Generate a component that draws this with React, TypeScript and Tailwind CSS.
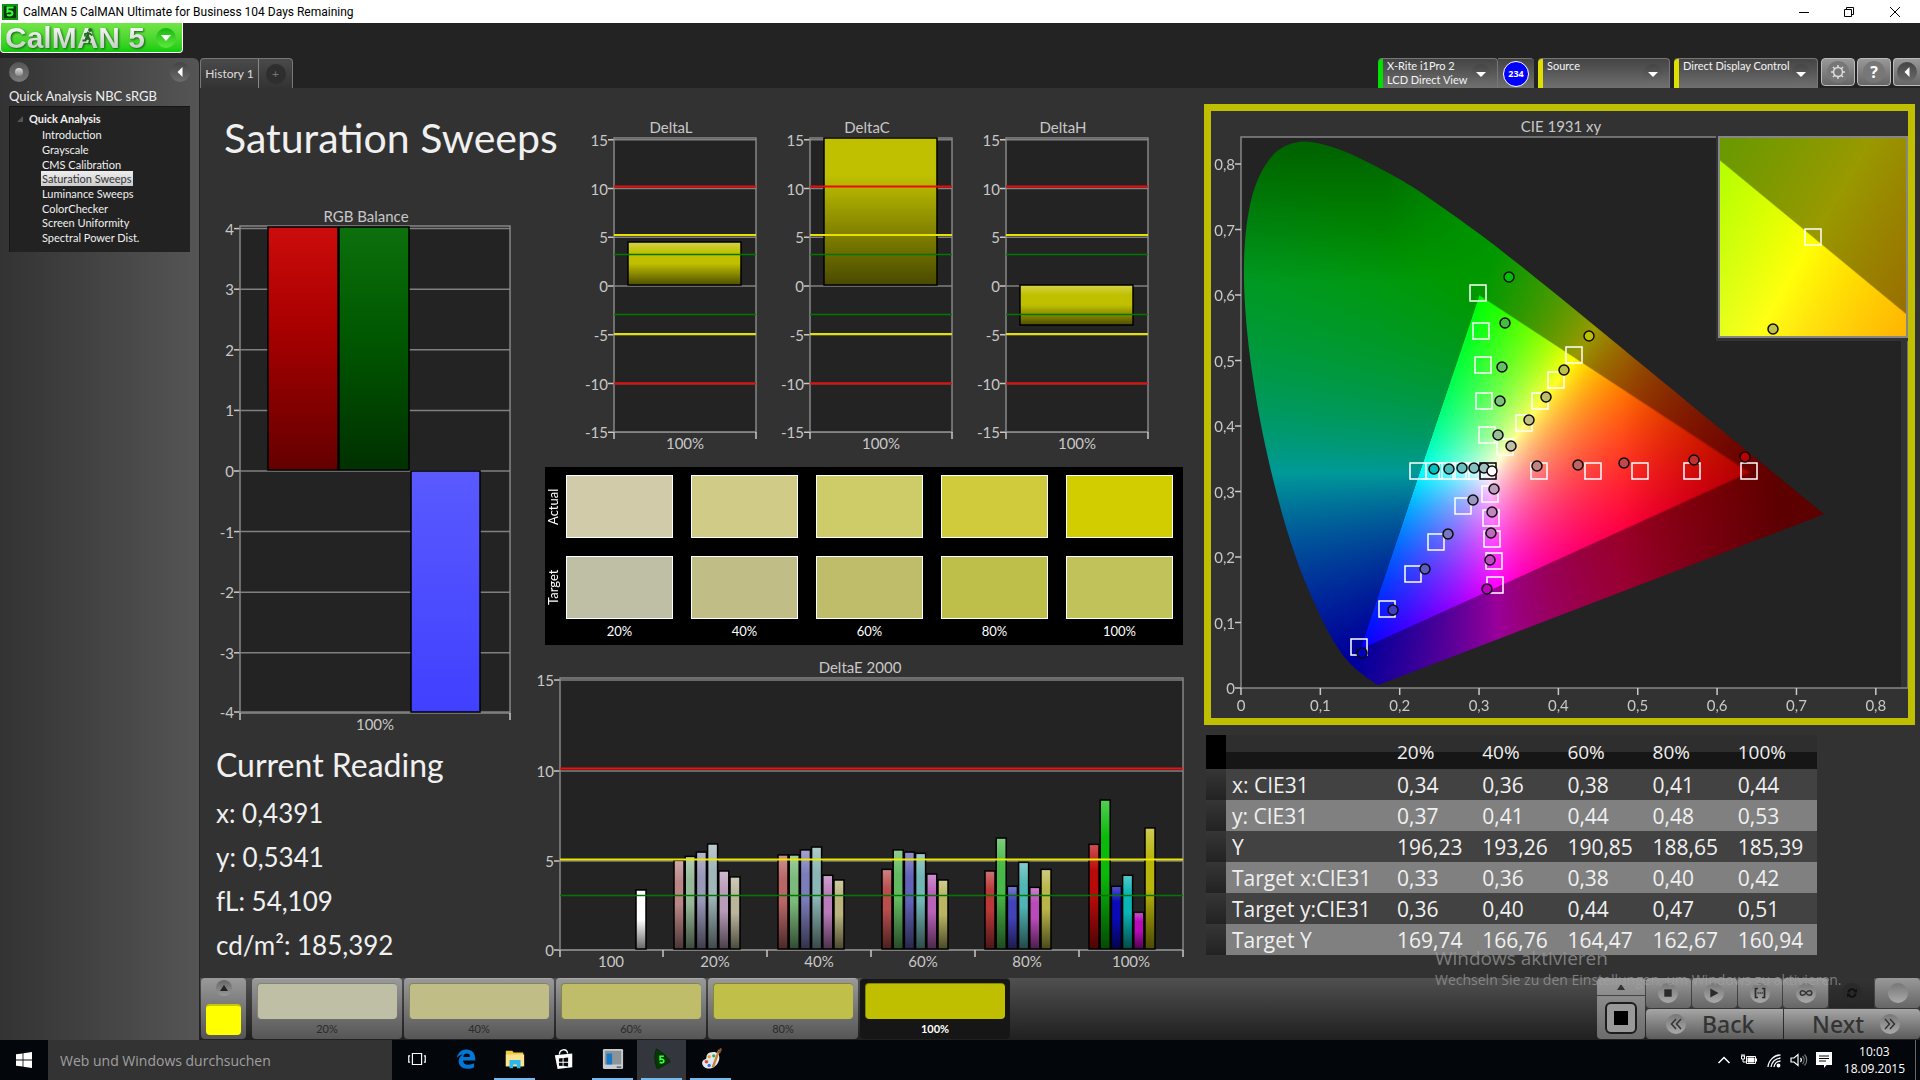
import { useEffect, useRef } from "react";
import type { ReactNode } from "react";

type Point = [number, number];

const navItems = [
  "Introduction",
  "Grayscale",
  "CMS Calibration",
  "Saturation Sweeps",
  "Luminance Sweeps",
  "ColorChecker",
  "Screen Uniformity",
  "Spectral Power Dist.",
];

const levels = ["20%", "40%", "60%", "80%", "100%"];
const actualColors = ["#d1cbaa", "#d1cb88", "#cecb69", "#d0cb3c", "#d1cd00"];
const targetColors = ["#bfbfa5", "#c0be86", "#bfbd69", "#bebe4a", "#c2c25a"];
const patternColors = ["#bfbfa5", "#c0be86", "#bfbd69", "#bfbf4a", "#bfbf00"];

const tableRows = [
  ["x: CIE31", "0,34", "0,36", "0,38", "0,41", "0,44"],
  ["y: CIE31", "0,37", "0,41", "0,44", "0,48", "0,53"],
  ["Y", "196,23", "193,26", "190,85", "188,65", "185,39"],
  ["Target x:CIE31", "0,33", "0,36", "0,38", "0,40", "0,42"],
  ["Target y:CIE31", "0,36", "0,40", "0,44", "0,47", "0,51"],
  ["Target Y", "169,74", "166,76", "164,47", "162,67", "160,94"],
];

const deltaE = [
  {
    values: [4.98, 5.2, 5.44, 5.89, 4.39, 4.06],
    colors: ["#b98585", "#98b998", "#9898b9", "#a0b6b9", "#b99cb9", "#b9b69c"],
  },
  {
    values: [5.28, 5.28, 5.56, 5.72, 4.15, 3.89],
    colors: ["#b96666", "#7cb97c", "#7c7cb9", "#8cb5b5", "#b97cb9", "#b9b57c"],
  },
  {
    values: [4.48, 5.56, 5.44, 5.37, 4.22, 3.89],
    colors: ["#b94e4e", "#62b962", "#6262b9", "#72b5b5", "#b962b9", "#b9b562"],
  },
  {
    values: [4.39, 6.22, 3.54, 4.87, 3.48, 4.48],
    colors: ["#b93838", "#48b948", "#4242b9", "#52b5b5", "#b94ab9", "#b9b54a"],
  },
  {
    values: [5.87, 8.33, 3.54, 4.15, 2.09, 6.78],
    colors: ["#b90a0a", "#0ab90a", "#0a0ab9", "#0ab5b5", "#b90ab9", "#b9b50a"],
  },
];

/* ---------- CIE 1931 diagram data ---------- */

const locus: Point[] = [
  [0.1741, 0.005], [0.1714, 0.0051], [0.1689, 0.0069], [0.1644, 0.0109],
  [0.1566, 0.0177], [0.144, 0.0297], [0.1355, 0.0399], [0.1241, 0.0578],
  [0.1096, 0.0868], [0.0913, 0.1327], [0.0687, 0.2007], [0.0454, 0.295],
  [0.0235, 0.4127], [0.0082, 0.5384], [0.0039, 0.6548], [0.0139, 0.7502],
  [0.0389, 0.812], [0.0743, 0.8338], [0.1142, 0.8262], [0.1547, 0.8059],
  [0.1929, 0.7816], [0.2296, 0.7543], [0.3016, 0.6923], [0.3731, 0.6245],
  [0.4441, 0.5547], [0.5125, 0.4866], [0.5752, 0.4242], [0.627, 0.3725],
  [0.6915, 0.3083], [0.7347, 0.2653],
];

const targets: Point[] = [
  [237, 156], [240, 194], [242, 228], [243, 264], [246, 298],
  [333, 218], [315, 243], [299, 264], [283, 286], [264, 310],
  [298, 334], [352, 334], [399, 334], [451, 334], [508, 334],
  [177, 334], [193, 334], [206, 334], [220, 334], [233, 334],
  [249, 357], [250, 381], [251, 402], [253, 424], [254, 448],
  [222, 369], [195, 405], [172, 437], [146, 472], [118, 510],
];

const measured: [number, number, string][] = [
  [268, 140, "#00bf00"], [264, 186, "#40bf40"], [261, 230, "#62bf62"], [259, 264, "#7dbf7d"], [257, 298, "#98bf98"],
  [348, 199, "#bfbf00"], [323, 233, "#bfbf4a"], [305, 260, "#bfbd69"], [288, 283, "#c0be86"], [270, 309, "#bfbfa5"],
  [296, 329, "#bf8585"], [337, 328, "#bf6262"], [383, 326, "#bf4848"], [453, 323, "#bf3030"], [504, 320, "#bf0000"],
  [193, 332, "#00bfbf"], [208, 332, "#4abfbf"], [221, 331, "#69bfbf"], [233, 331, "#86bfbf"], [243, 331, "#a0bfbf"],
  [253, 352, "#bf9fbf"], [251, 375, "#bf86bf"], [250, 396, "#bf69bf"], [249, 423, "#bf4abf"], [246, 452, "#bf00bf"],
  [232, 363, "#9898bf"], [207, 397, "#7878bf"], [184, 432, "#5c5cbf"], [152, 473, "#4040bf"], [121, 516, "#0000bf"],
];

const clamp = (v: number) => Math.min(1, Math.max(0, v));

function chromaColor(x: number, y: number, edge: number): [number, number, number] {
  const yy = Math.max(y, 0.002);
  const X = x / yy;
  const Z = (1 - x - yy) / yy;
  const r = 3.2406 * X - 1.5372 - 0.4986 * Z;
  const g = -0.9689 * X + 1.8758 + 0.0415 * Z;
  const b = 0.0557 * X - 0.204 + 1.057 * Z;
  const max = Math.max(r, g, b);
  const inside = clamp((Math.min(r, g, b) / max) * edge + 0.5);
  const redFade = 1 - 0.4 * clamp((x - 0.48) / 0.2) * clamp(r / max);
  const greenFade = 1 - 0.34 * clamp((y - 0.62) / 0.2) * clamp((0.34 - x) / 0.16);
  const k = 255 * (0.6 + 0.4 * inside) * redFade * greenFade;
  return [clamp(r / max) * k, clamp(g / max) * k, clamp(b / max) * k];
}

type GamutProps = {
  width: number;
  height: number;
  edge: number;
  toXy: (px: number, py: number) => Point;
  outline?: (x: number, y: number) => Point;
};

function GamutCanvas({ width, height, edge, toXy, outline }: GamutProps) {
  const ref = useRef<HTMLCanvasElement>(null);

  useEffect(() => {
    const ctx = ref.current?.getContext("2d");
    if (!ctx) return;
    const image = ctx.createImageData(width, height);
    for (let py = 0; py < height; py++) {
      for (let px = 0; px < width; px++) {
        const [x, y] = toXy(px, py);
        const [r, g, b] = chromaColor(x, y, edge);
        const i = (py * width + px) * 4;
        image.data[i] = r;
        image.data[i + 1] = g;
        image.data[i + 2] = b;
        image.data[i + 3] = 255;
      }
    }
    ctx.putImageData(image, 0, 0);
    if (!outline) return;

    // keep only what lies inside the spectral locus
    const pts = locus.map(([x, y]) => outline(x, y));
    ctx.globalCompositeOperation = "destination-in";
    ctx.beginPath();
    ctx.moveTo(pts[0][0], pts[0][1]);
    for (let i = 0; i < pts.length - 1; i++) {
      const p0 = pts[Math.max(0, i - 1)];
      const p1 = pts[i];
      const p2 = pts[i + 1];
      const p3 = pts[Math.min(pts.length - 1, i + 2)];
      ctx.bezierCurveTo(
        p1[0] + (p2[0] - p0[0]) / 6,
        p1[1] + (p2[1] - p0[1]) / 6,
        p2[0] - (p3[0] - p1[0]) / 6,
        p2[1] - (p3[1] - p1[1]) / 6,
        p2[0],
        p2[1],
      );
    }
    ctx.closePath();
    ctx.fill();
    ctx.globalCompositeOperation = "source-over";
  }, [width, height, edge, toXy, outline]);

  return <canvas ref={ref} width={width} height={height} className="block" />;
}

const plotToXy = (px: number, py: number): Point => [px / 793.5, (551 - py) / 655];
const xyToPlot = (x: number, y: number): Point => [x * 793.5, 551 - y * 655];
const insetToXy = (px: number, py: number): Point => [0.4193 + (px - 94) / 3600, 0.5053 - (py - 100) / 3740];

/* ---------- Chart parts ---------- */

type LabelProps = { x: number; y: number; anchor?: "start" | "middle" | "end"; children: ReactNode };

function Label({ x, y, anchor = "middle", children }: LabelProps) {
  return (
    <text x={x} y={y} textAnchor={anchor} className="fill-[#c8c8c8] text-[15px]">
      {children}
    </text>
  );
}

type PlotProps = {
  left: number;
  right: number;
  top: number;
  bottom: number;
  rows: [number, string][];
  ticks: number[];
};

function Plot({ left, right, top, bottom, rows, ticks }: PlotProps) {
  return (
    <g>
      <rect x={left} y={top} width={right - left} height={bottom - top} fill="#232323" />
      {rows.map(([y, text]) => (
        <g key={text}>
          <path d={`M${left} ${y}H${right}`} stroke="#808080" strokeWidth="1.5" />
          <path d={`M${left - 6} ${y}H${left}`} stroke="#c8c8c8" strokeWidth="1.5" />
          <Label x={left - 6} y={y + 6} anchor="end">{text}</Label>
        </g>
      ))}
      <rect x={left} y={top} width={right - left} height={bottom - top} fill="none" stroke="#868686" strokeWidth="1.5" />
      {ticks.map((x) => (
        <path key={x} d={`M${x} ${bottom}v7`} stroke="#c8c8c8" strokeWidth="1.5" />
      ))}
    </g>
  );
}

function BarShade() {
  return (
    <linearGradient id="barShade" x1="0" y1="0" x2="0" y2="1">
      <stop offset="0" stopColor="#fff" stopOpacity="0.3" />
      <stop offset="0.25" stopColor="#fff" stopOpacity="0" />
      <stop offset="0.5" stopColor="#000" stopOpacity="0" />
      <stop offset="1" stopColor="#000" stopOpacity="0.6" />
    </linearGradient>
  );
}

type BarProps = { x: number; y: number; width: number; height: number; fill: string; shade?: string };

function Bar({ x, y, width, height, fill, shade = "url(#barShade)" }: BarProps) {
  return (
    <g>
      <rect x={x} y={y} width={width} height={height} fill={fill} />
      <rect x={x} y={y} width={width} height={height} fill={shade} stroke="#000" strokeWidth="1.5" />
    </g>
  );
}

function RgbBalance() {
  const rows = [4, 3, 2, 1, 0, -1, -2, -3, -4].map((v): [number, string] => [
    Math.min(507, 266 - v * 60.6),
    String(v),
  ]);
  return (
    <svg viewBox="0 0 330 530" className="w-full" role="img" aria-label="RGB Balance">
      <defs>
        <linearGradient id="redBar" x1="0" y1="0" x2="0" y2="1">
          <stop offset="0" stopColor="#cc0c0c" />
          <stop offset="0.38" stopColor="#ac0000" />
          <stop offset="1" stopColor="#640000" />
        </linearGradient>
        <linearGradient id="greenBar" x1="0" y1="0" x2="0" y2="1">
          <stop offset="0" stopColor="#0c700c" />
          <stop offset="0.45" stopColor="#005800" />
          <stop offset="1" stopColor="#003000" />
        </linearGradient>
        <linearGradient id="blueBar" x1="0" y1="0" x2="0" y2="1">
          <stop offset="0" stopColor="#5a5aff" />
          <stop offset="1" stopColor="#4040ff" />
        </linearGradient>
      </defs>
      <Label x={166} y={17}>RGB Balance</Label>
      <Plot left={40} right={310} top={21} bottom={508} rows={rows} ticks={[40, 310]} />
      <Bar x={68} y={22} width={70} height={243} fill="#a00000" shade="url(#redBar)" />
      <Bar x={139} y={22} width={70} height={243} fill="#005000" shade="url(#greenBar)" />
      <Bar x={211} y={266} width={69} height={241} fill="#4a4aff" shade="url(#blueBar)" />
      <Label x={175} y={525}>100%</Label>
    </svg>
  );
}

function DeltaChart({ title, top, bottom }: { title: string; top: number; bottom: number }) {
  const rows = [15, 10, 5, 0, -5, -10, -15].map((v): [number, string] => [176 - v * 9.75, String(v)]);
  const clipped = top <= 29;
  return (
    <svg viewBox="0 0 196 350" className="w-full" role="img" aria-label={title}>
      <defs>
        <linearGradient id="tallShade" x1="0" y1="0" x2="0" y2="1">
          <stop offset="0.25" stopColor="#000" stopOpacity="0" />
          <stop offset="1" stopColor="#000" stopOpacity="0.62" />
        </linearGradient>
      </defs>
      <Label x={91} y={23}>{title}</Label>
      <Plot left={34} right={176} top={28} bottom={322} rows={rows} ticks={[34, 176]} />
      <Bar
        x={48}
        y={top}
        width={113}
        height={bottom - top}
        fill="#c0c000"
        shade={clipped ? "url(#tallShade)" : undefined}
      />
      <path d="M34 76.5H176M34 273.5H176" stroke="#e80c0c" strokeWidth="2" />
      <path d="M34 125H176M34 224H176" stroke="#e6e000" strokeWidth="2" />
      <path d="M34 144.5H176M34 204.5H176" stroke="#007800" strokeWidth="1.5" />
      <Label x={105} y={339}>100%</Label>
    </svg>
  );
}

function DeltaEChart() {
  const groupX = [144, 248, 352, 455, 559];
  return (
    <svg viewBox="0 0 674 322" className="w-full" role="img" aria-label="DeltaE 2000">
      <defs>
        <BarShade />
      </defs>
      <Label x={330} y={23}>DeltaE 2000</Label>
      <Plot
        left={30}
        right={653}
        top={28}
        bottom={300}
        rows={[[30, "15"], [121, "10"], [211, "5"], [300, "0"]]}
        ticks={[30, 133, 237, 341, 445, 549, 653]}
      />
      <Bar x={106} y={240} width={10} height={59} fill="#ffffff" />
      {deltaE.map((group, g) =>
        group.values.map((v, i) => (
          <Bar
            key={`${g}-${i}`}
            x={groupX[g] + i * 11.2}
            y={300 - v * 18}
            width={10}
            height={v * 18 - 1}
            fill={group.colors[i]}
          />
        )),
      )}
      <path d="M30 118.5H653" stroke="#f01010" strokeWidth="2" />
      <path d="M30 209.5H653" stroke="#ece800" strokeWidth="2" />
      <path d="M30 245.5H653" stroke="#007800" strokeWidth="1.5" />
      {["100", ...levels].map((text, i) => (
        <Label key={text} x={81 + i * 104} y={317}>{text}</Label>
      ))}
    </svg>
  );
}

function CieDiagram() {
  return (
    <svg viewBox="0 0 697 607" className="w-full" role="img" aria-label="CIE 1931 xy">
      <Label x={350} y={21}>CIE 1931 xy</Label>
      <rect x="30" y="26" width="660" height="551" fill="#232323" />
      <foreignObject x="30" y="26" width="660" height="551">
        <GamutCanvas width={660} height={551} edge={200} toXy={plotToXy} outline={xyToPlot} />
      </foreignObject>
      <rect x="30" y="26" width="667" height="551" fill="none" stroke="#868686" strokeWidth="1.5" />
      {[0, 1, 2, 3, 4, 5, 6, 7, 8].map((n) => {
        const text = n === 0 ? "0" : `0,${n}`;
        return (
          <g key={n}>
            <path
              d={`M24 ${577 - n * 65.5}h6M${30 + n * 79.35} 577v7`}
              stroke="#c8c8c8"
              strokeWidth="1.5"
            />
            <Label x={24} y={583 - n * 65.5} anchor="end">{text}</Label>
            <Label x={30 + n * 79.35} y={600}>{text}</Label>
          </g>
        );
      })}
      <g transform="translate(30 26)" strokeWidth="1.5">
        {targets.map(([x, y]) => (
          <rect key={`${x}-${y}`} x={x - 8} y={y - 8} width="16" height="16" fill="none" stroke="#fff" />
        ))}
        <rect x="239" y="326" width="16" height="16" fill="none" stroke="#000" />
        {measured.map(([x, y, fill]) => (
          <circle key={`${x}-${y}`} cx={x} cy={y} r="5" fill={fill} stroke="#0c0c0c" />
        ))}
        <circle cx="251" cy="334" r="5" fill="#fff" stroke="#0c0c0c" />
      </g>
      {/* Magnified view of the selected point */}
      <rect x="505" y="24" width="192" height="206" fill="#323232" />
      <foreignObject x="508" y="26" width="189" height="200">
        <GamutCanvas width={189} height={200} edge={900} toXy={insetToXy} />
      </foreignObject>
      <rect x="508" y="26" width="188" height="200" fill="none" stroke="#868686" strokeWidth="2" />
      <rect x="594" y="118" width="16" height="16" fill="none" stroke="#fff" strokeWidth="1.5" />
      <circle cx="562" cy="218" r="5" fill="#bfbf4a" stroke="#0c0c0c" strokeWidth="1.5" />
    </svg>
  );
}

/* ---------- Shell parts ---------- */

function RoundArrow({ d }: { d: string }) {
  return (
    <span className="flex size-5 shrink-0 items-center justify-center rounded-full bg-gradient-to-b from-[#444] to-[#6c6c6c]">
      <svg viewBox="0 0 12 12" className="size-3 fill-white">
        <path d={d} />
      </svg>
    </span>
  );
}

function TitleBar() {
  return (
    <header className="flex h-[23px] items-center bg-white pl-0.5 text-black">
      <svg viewBox="0 0 16 16" className="size-4">
        <rect width="16" height="16" fill="#0a3a0a" />
        <rect x="1" y="1" width="14" height="14" fill="none" stroke="#12b012" strokeWidth="1.5" />
        <path d="M11.5 3.5h-6v4.2c1.5-.9 5-.8 5 1.6 0 2.2-3 2.6-5.4 1.6" fill="none" stroke="#3cff3c" strokeWidth="2" />
      </svg>
      <span className="ml-[5px] font-['Roboto',sans-serif] text-[12px]">
        CalMAN 5 CalMAN Ultimate for Business 104 Days Remaining
      </span>
      <div className="ml-auto flex">
        <button aria-label="Minimize" className="flex h-[23px] w-[45px] items-center justify-center">
          <svg viewBox="0 0 10 10" className="size-2.5 stroke-black"><path d="M0 5.5h10" /></svg>
        </button>
        <button aria-label="Restore" className="flex h-[23px] w-[46px] items-center justify-center">
          <svg viewBox="0 0 10 10" className="size-2.5 fill-none stroke-black">
            <path d="M.5 2.5h7v7h-7zM2.5 2.5v-2h7v7h-2" />
          </svg>
        </button>
        <button aria-label="Close" className="mr-0.5 flex h-[23px] w-[46px] items-center justify-center">
          <svg viewBox="0 0 10 10" className="size-2.5 stroke-black"><path d="M0 0l10 10M10 0L0 10" /></svg>
        </button>
      </div>
    </header>
  );
}

function Logo() {
  return (
    <button
      aria-label="CalMAN 5 menu"
      className="flex h-[30px] w-[183px] items-center justify-between rounded-b-sm border-b border-l border-r border-white bg-gradient-to-b from-[#72e548] to-[#08cc08] pl-1 pr-1.5"
    >
      <span className="relative whitespace-nowrap bg-gradient-to-b from-white to-[#bcc4bc] bg-clip-text font-['Liberation_Sans',sans-serif] text-[30px] font-bold leading-[30px] text-transparent drop-shadow-[1px_1px_1px_#1a5a1a]">
        CalMAN 5
        <svg viewBox="0 0 14 18" className="absolute left-[76px] top-1 h-[18px] w-3.5 fill-none stroke-[#1f6a1f]" strokeWidth="1.8">
          <circle cx="9" cy="3" r="1" />
          <path d="M8 5.500l-2 5 3 2-1 4M6 10.500l-1.500 3H1.500M8 6l3.500 2.500M7.500 6L4 7v2.500" />
        </svg>
      </span>
      <span className="flex size-5 items-center justify-center rounded-full bg-gradient-to-b from-[#0cb80c] to-[#5ce83c]">
        <svg viewBox="0 0 10 6" className="h-1.5 w-2.5 fill-white"><path d="M0 0h10L5 6z" /></svg>
      </span>
    </button>
  );
}

function Sidebar() {
  return (
    <aside className="mt-[5px] flex-1 rounded-tr-md bg-gradient-to-r from-[#333] to-[#555] px-[9px]">
      <div className="flex h-7 items-center justify-between">
        <span className="flex size-5 items-center justify-center rounded-full bg-gradient-to-b from-[#555] to-[#7a7a7a]">
          <span className="size-2 rounded-full bg-gradient-to-b from-[#ddd] to-[#888]" />
        </span>
        <button aria-label="Collapse panel">
          <RoundArrow d="M8.500 1v10L3.500 6z" />
        </button>
      </div>
      <h2 className="text-[13px] leading-5 text-[#f0f0f0]">Quick Analysis NBC sRGB</h2>
      <nav className="h-[146px] border-l border-t border-[#151515] bg-[#222] pl-[7px] pt-1 text-[11px] text-[#f0f0f0]">
        <p className="flex h-4 items-center gap-1.5 font-bold">
          <svg viewBox="0 0 6 6" className="size-1.5 fill-[#555]"><path d="M6 0v6H0z" /></svg>
          Quick Analysis
        </p>
        <ul className="pl-6">
          {navItems.map((item) => (
            <li key={item} className="h-[15px] leading-[15px] nth-[3n]:h-[14px]">
              <a
                href="#"
                className={
                  item === "Saturation Sweeps"
                    ? "inline-block bg-gradient-to-b from-[#eee] to-[#ccc] px-px text-[#333]"
                    : "inline-block px-px"
                }
              >
                {item}
              </a>
            </li>
          ))}
        </ul>
      </nav>
    </aside>
  );
}

function DeviceButton({ lines, color, width }: { lines: string[]; color: string; width: string }) {
  return (
    <button
      className={`flex h-[30px] items-start justify-between rounded-t border-r border-t border-[#777] bg-gradient-to-b from-[#444] to-[#707070] pr-1.5 text-left text-[11px] leading-[14px] text-[#f4f4f4] ${width}`}
    >
      <span className={`h-full w-[5px] shrink-0 rounded-tl ${color}`} />
      <span className="ml-1 flex-1 whitespace-nowrap">
        {lines.map((line) => (
          <span key={line} className="block">{line}</span>
        ))}
      </span>
      <span className="mt-[5px]">
        <RoundArrow d="M1 4h10L6 9z" />
      </span>
    </button>
  );
}

function TopBar() {
  const square =
    "flex h-7 w-[34px] items-center justify-center rounded border border-[#bbb] bg-gradient-to-b from-[#999] to-[#666] text-white";
  return (
    <div className="flex h-[65px] items-end justify-between bg-[#232323]">
      <div className="flex h-[30px] rounded-t border border-b-0 border-[#777] bg-gradient-to-b from-[#4a4a4a] to-[#333] text-[12px] text-[#ddd]">
        <button className="w-[58px] border-r border-[#888]">History 1</button>
        <button aria-label="Add history" className="flex w-[33px] items-center justify-center">
          <span className="flex size-5 items-center justify-center rounded-full bg-[#2e2e2e] text-[#777]">+</span>
        </button>
      </div>
      <div className="flex items-start">
        <DeviceButton lines={["X-Rite i1Pro 2", "LCD Direct View"]} color="bg-[#00e000]" width="w-[120px]" />
        <div className="mr-1 flex h-[30px] w-9 items-center justify-center rounded-tr border-t border-[#777] bg-gradient-to-b from-[#444] to-[#707070]">
          <span className="flex size-[26px] items-center justify-center rounded-full border border-white bg-[#0000ff] font-['Open_Sans',sans-serif] text-[9px] font-bold text-white">
            234
          </span>
        </div>
        <DeviceButton lines={["Source"]} color="bg-[#e0e000]" width="mr-1 w-[132px]" />
        <DeviceButton lines={["Direct Display Control"]} color="bg-[#e0e000]" width="mr-[3px] w-[144px]" />
        <div className="flex gap-0.5 overflow-hidden">
          <button aria-label="Settings" className={square}>
            <span className="flex size-[22px] items-center justify-center rounded-full bg-[#777]">
              <svg viewBox="0 0 16 16" className="size-4 fill-none stroke-[#ddd]" strokeWidth="1.5">
                <circle cx="8" cy="8" r="4.500" />
                <path d="M8 1v2.500M8 12.500V15M1 8h2.500M12.500 8H15M3 3l2 2M11 11l2 2M13 3l-2 2M3 13l2-2" />
              </svg>
            </span>
          </button>
          <button aria-label="Help" className={`${square} font-['Open_Sans',sans-serif] text-[16px] font-bold`}>
            <span className="flex size-[22px] items-center justify-center rounded-full bg-[#777]">?</span>
          </button>
          <button aria-label="Collapse" className="flex h-7 w-[27px] items-center justify-center rounded-l border border-r-0 border-[#bbb] bg-gradient-to-b from-[#999] to-[#666]">
            <RoundArrow d="M8.500 1v10L3.500 6z" />
          </button>
        </div>
      </div>
    </div>
  );
}

function SwatchRow({ label, colors }: { label: string; colors: string[] }) {
  return (
    <>
      <span className="-mr-[14px] flex rotate-180 items-center justify-center text-[13px] [writing-mode:vertical-rl]">
        {label}
      </span>
      {colors.map((c) => (
        <div key={c} className="h-[63px] border border-white" style={{ backgroundColor: c }} />
      ))}
    </>
  );
}

function Comparator() {
  return (
    <div className="ml-[15px] mr-[21px] mt-[7px] grid h-[178px] grid-cols-[3px_repeat(5,1fr)] grid-rows-[63px_63px_auto] gap-[18px] bg-black pr-2.5 pt-2 text-white">
      <SwatchRow label="Actual" colors={actualColors} />
      <SwatchRow label="Target" colors={targetColors} />
      <span />
      {levels.map((level) => (
        <span key={level} className="-mt-[16px] text-center text-[13px] leading-5">{level}</span>
      ))}
    </div>
  );
}

function ResultTable() {
  return (
    <table className="ml-0.5 mt-[10px] w-[611px] table-fixed text-left font-['Open_Sans',sans-serif] text-[21px] text-[#f0f0f0]">
      <colgroup>
        <col className="w-5" />
        <col className="w-[165px]" />
        <col span={5} />
      </colgroup>
      <thead>
        <tr className="h-[34px] bg-gradient-to-b from-[#2e2e2e] from-50% to-[#161616] to-50%">
          <td className="bg-black" />
          <td />
          {levels.map((level) => (
            <th key={level} scope="col" className="pl-1.5 text-[19px] font-normal leading-[34px]">{level}</th>
          ))}
        </tr>
      </thead>
      <tbody>
        {tableRows.map(([name, ...values]) => (
          <tr key={name} className="h-[31px] bg-[#424242] leading-[30px] even:bg-[#808080]">
            <td className="bg-gradient-to-b from-[#363636] to-[#222]" />
            <th scope="row" className="whitespace-nowrap pl-1.5 font-normal">{name}</th>
            {values.map((value, i) => (
              <td key={i} className="pl-1.5">{value}</td>
            ))}
          </tr>
        ))}
      </tbody>
    </table>
  );
}

function Reading() {
  return (
    <section className="mt-2 pl-4 text-[26px] leading-[44px] text-[#f0f0f0]">
      <h2 className="mb-1 text-[32px]">Current Reading</h2>
      <p>x: 0,4391</p>
      <p>y: 0,5341</p>
      <p>fL: 54,109</p>
      <p>cd/m²: 185,392</p>
    </section>
  );
}

const transportIcons: [string, ReactNode][] = [
  ["Stop", <path d="M4 4h9v9H4z" />],
  ["Read", <path d="M4 3l10 5.500L4 14z" />],
  ["Read series", <path d="M2 2h4v2H4v9h2v2H2zM15 2h-4v2h2v9h-2v2h4zM5.500 7.500h1.500v2H5.500zM8 7.500h1.500v2H8zM10.500 7.500H12v2h-1.500z" />],
  [
    "Read continuous",
    <path
      d="M8.500 8.500c-2-3.500-7-3.500-7 0s5 3.500 7 0 7-3.500 7 0-5 3.500-7 0z"
      fill="none"
      stroke="#333"
      strokeWidth="1.800"
    />,
  ],
  ["Repeat", <path d="M3 8c0-5 7-7 10-3l1.500-2V8H10l1.500-1.500C9.500 4 5.500 5 5.500 8zM14 9c0 5-7 7-10 3l-1.500 2V9H7l-1.500 1.500C7.500 13 11.500 12 11.500 9z" fill="#101010" />],
  ["Record", null],
];

function BottomBar() {
  const nav =
    "flex h-[30px] flex-1 items-center bg-gradient-to-b from-[#a6a6a6] to-[#5c5c5c] font-['Noto_Sans',sans-serif] text-[23px] font-medium text-[#333]";
  const dot =
    "flex size-5 items-center justify-center rounded-full bg-gradient-to-b from-[#777] to-[#aaa] text-[#333]";
  return (
    <footer className="flex h-[62px] justify-between bg-gradient-to-b from-[#505050] to-[#202020]">
      <div className="flex gap-0.5 pl-px">
        <div className="mr-1 flex h-[61px] w-[45px] flex-col items-center justify-between rounded bg-gradient-to-b from-[#9a9a9a] to-[#555] pb-1">
          <button aria-label="Show patterns" className="mt-0.5 flex size-4 items-center justify-center rounded-full bg-gradient-to-b from-[#666] to-[#999]">
            <svg viewBox="0 0 8 6" className="h-1.5 w-2 fill-[#222]"><path d="M4 0l4 6H0z" /></svg>
          </button>
          <span className="h-[31px] w-[35px] rounded-sm border-t-2 border-[#c8c800] bg-[#ffff00]" />
        </div>
        {levels.map((level, i) => (
          <button
            key={level}
            className={
              level === "100%"
                ? "h-[61px] w-[150px] rounded border-t border-[#333] bg-[#161616] px-[5px] pt-1 text-[11px] font-bold text-white"
                : "h-[61px] w-[150px] rounded border-t border-[#aaa] bg-gradient-to-b from-[#999] to-[#565656] px-[5px] pt-1 text-[11px] text-[#2a2a2a]"
            }
          >
            <span
              className="block h-9 rounded border-l border-t border-black/30"
              style={{ backgroundColor: patternColors[i] }}
            />
            <span className="block leading-5">{level}</span>
          </button>
        ))}
      </div>
      <div className="flex gap-px">
        <div className="flex h-[61px] w-12 flex-col rounded bg-gradient-to-b from-[#999] to-[#6c6c6c]">
          <button aria-label="Show meter" className="flex h-[18px] items-center justify-center border-b border-[#444]">
            <svg viewBox="0 0 8 6" className="h-1.5 w-2 fill-[#333]"><path d="M4 0l4 6H0z" /></svg>
          </button>
          <button aria-label="Stop reading" className="mx-auto mt-1.5 flex size-8 items-center justify-center rounded-md border-2 border-[#1c1c1c] bg-[#999]">
            <span className="size-3.5 bg-black" />
          </button>
        </div>
        <div className="flex w-[274px] flex-col gap-px">
          <div className="flex gap-px">
            {transportIcons.map(([name, icon]) => (
              <button
                key={name}
                aria-label={name}
                className={
                  name === "Repeat"
                    ? "flex h-[30px] flex-1 items-center justify-center bg-gradient-to-b from-[#333] to-[#262626]"
                    : "flex h-[30px] flex-1 items-center justify-center rounded-sm bg-gradient-to-b from-[#999] to-[#666]"
                }
              >
                <span
                  className={
                    name === "Repeat"
                      ? "flex size-5 items-center justify-center rounded-full bg-[#2a2a2a]"
                      : "flex size-5 items-center justify-center rounded-full bg-gradient-to-b from-[#777] to-[#aaa]"
                  }
                >
                  <svg viewBox="0 0 17 17" className="size-3.5 fill-[#2a2a2a]">{icon}</svg>
                </span>
              </button>
            ))}
          </div>
          <div className="flex gap-px">
            <button className={`${nav} gap-4 rounded-l pl-5`}>
              <span className={dot}>
                <svg viewBox="0 0 12 12" className="size-3 fill-none stroke-[#333]" strokeWidth="1.5">
                  <path d="M6 1L1.500 6 6 11M11 1L6.500 6 11 11" />
                </svg>
              </span>
              Back
            </button>
            <button className={`${nav} justify-end gap-4 rounded-r pr-5`}>
              Next
              <span className={dot}>
                <svg viewBox="0 0 12 12" className="size-3 fill-none stroke-[#333]" strokeWidth="1.5">
                  <path d="M1 1l4.500 5L1 11M6 1l4.500 5L6 11" />
                </svg>
              </span>
            </button>
          </div>
        </div>
      </div>
    </footer>
  );
}

const taskIcons: { name: string; running?: boolean; active?: boolean; icon: ReactNode }[] = [
  {
    name: "Task View",
    icon: <path d="M7 6h10v12H7zM4.500 8.500H3v7h1.500M19.500 8.500H21v7h-1.500" fill="none" stroke="#fff" strokeWidth="1.3" />,
  },
  {
    name: "Edge",
    icon: (
      <path
        fill="#0078d7"
        d="M2 11C3 4 8 1.500 12.500 1.500c6 0 9.500 4 9.500 9.500v2.500H8.800c.2 3.500 3 4.800 6 4.800 2.300 0 4.300-.6 6-1.600v4.300c-2 1.100-4.500 1.700-7.300 1.700C7.500 22.700 4 19 4 14.500c0-3.500 1.800-6 4.800-7.500C6 7.200 3.500 8.700 2 11zM8.900 9.800h7.500c0-2.400-1.200-3.700-3.500-3.700-2.200 0-3.500 1.300-4 3.700z"
      />
    ),
  },
  {
    name: "Explorer",
    running: true,
    icon: (
      <>
        <path d="M2 3h7l1.500 2H21v15H2z" fill="#f5c842" />
        <path d="M2 7h20v13H2z" fill="#fde38e" />
        <path d="M6 13h12v9h-4v-4h-4v4H6z" fill="#2ab7ee" />
      </>
    ),
  },
  {
    name: "Store",
    icon: (
      <>
        <path d="M2 8l19-2v15l-16 2z" fill="#fff" />
        <path d="M7 7c0-6 8-7 9-1" fill="none" stroke="#fff" strokeWidth="1.5" />
        <path d="M6.500 11.500l4-.5v4h-4zM11.500 11l5-.6V15h-5zM6.500 16h4v3.700l-4-.4zM11.500 16h5v4.300l-5-.6z" fill="#05070c" />
      </>
    ),
  },
  {
    name: "Monitor",
    running: true,
    icon: (
      <>
        <rect x="1" y="1" width="22" height="22" rx="1.5" fill="#c9cdd0" />
        <rect x="3" y="3" width="18" height="15" fill="#8d9499" />
        <rect x="5" y="6" width="6" height="12" fill="#1778c8" />
        <path d="M16 20h5v2h-5z" fill="#667" />
      </>
    ),
  },
  {
    name: "CalMAN",
    running: true,
    active: true,
    icon: (
      <>
        <path d="M6 1c5 3 12 8 15 14L7 23C4 17 3 8 6 1z" fill="#063806" stroke="#0a240a" />
        <path d="M14 9h-4v3.500c2-.8 4.500 0 4 2s-3 2-4.500 1" fill="none" stroke="#3cff3c" strokeWidth="1.8" />
      </>
    ),
  },
  {
    name: "Paint",
    running: true,
    icon: (
      <>
        <path d="M11 5c6-2 11 1 10 7-1 7-8 12-14 10-5-2-6-7-3-9 2-1 3-1 3-3 0-2 1-4 4-5z" fill="#dfe9f2" />
        <circle cx="7" cy="15" r="2" fill="#e04a3a" />
        <circle cx="10" cy="9.500" r="1.800" fill="#f0a020" />
        <circle cx="15" cy="8.500" r="1.800" fill="#3aa84a" />
        <circle cx="10" cy="19" r="1.800" fill="#3a6ae0" />
        <path d="M21 2l-7 19" stroke="#c98038" strokeWidth="2.5" />
        <path d="M22 0l-3 5 3 1 2-5z" fill="#8a5a30" />
      </>
    ),
  },
];

function Taskbar() {
  return (
    <div className="flex h-10 items-stretch bg-[#03060b] text-white">
      <button aria-label="Start" className="flex w-12 items-center justify-center">
        <svg viewBox="0 0 16 16" className="size-4 fill-white">
          <path d="M0 2.300L6.600 1.400V7.600H0zM7.400 1.300L16 0v7.600H7.400zM0 8.400h6.600v6.200L0 13.700zM7.400 8.400H16V16l-8.600-1.300z" />
        </svg>
      </button>
      <input
        aria-label="Suche"
        placeholder="Web und Windows durchsuchen"
        className="w-[344px] bg-[#333] px-3 font-['Open_Sans',sans-serif] text-[14px] placeholder:text-[#a0a0a0]"
      />
      <div className="flex">
        {taskIcons.map(({ name, running, active, icon }) => (
          <button
            key={name}
            aria-label={name}
            className={`flex w-[49px] items-center justify-center px-1 ${active ? "bg-[#33373d] px-0" : ""}`}
          >
            <span className={`flex h-full w-full items-center justify-center border-b-2 ${running ? "border-[#76b9ed]" : "border-transparent"}`}>
              <svg viewBox="0 0 24 24" className="size-[22px]">{icon}</svg>
            </span>
          </button>
        ))}
      </div>
      <div className="ml-auto flex items-center gap-2 font-['Open_Sans',sans-serif] text-[12px] leading-[17px]">
        <svg viewBox="0 0 16 16" className="size-4 fill-none stroke-white" strokeWidth="1.5"><path d="M2.500 11L8 5.500l5.500 5.500" /></svg>
        <svg viewBox="0 0 18 16" className="h-4 w-[18px] fill-none stroke-white">
          <path d="M6.500 4.500h9v7h-9zM16.500 6.500v3M1 4h4M1.500 4v3h3V4M2 2v2M4 2v2M3 7v3h3" />
          <path d="M8 6h6v4H8z" fill="#fff" />
        </svg>
        <svg viewBox="0 0 16 16" className="size-4 fill-none stroke-white" strokeWidth="1.3">
          <path d="M2 15A13 13 0 0 1 14.500 3M5 15a10 10 0 0 1 9.500-9M8 15a7 7 0 0 1 6.500-6" />
          <circle cx="12.500" cy="13.500" r="1.3" fill="#fff" />
        </svg>
        <svg viewBox="0 0 18 16" className="h-4 w-[18px] fill-none stroke-white" strokeWidth="1.2">
          <path d="M1 6h3l4-3.500v11L4 10H1zM10.500 6a3 3 0 0 1 0 4" />
          <path d="M12.500 4a6 6 0 0 1 0 8M14.500 2.500a8 8 0 0 1 0 11" stroke="#777" />
        </svg>
        <svg viewBox="0 0 16 16" className="size-4">
          <path d="M0 0h16v13h-5.500L8 16v-3H0z" fill="#fff" />
          <path d="M3 4h10M3 6.500h10M3 9h7" stroke="#03060b" />
        </svg>
        <time className="ml-1 mr-0.5 text-center" dateTime="2015-09-18T10:03">
          10:03
          <br />
          18.09.2015
        </time>
        <span className="mr-1 h-full w-px bg-[#666]" />
      </div>
    </div>
  );
}

export default function App() {
  return (
    <div className="relative flex min-h-screen flex-col overflow-hidden bg-[#232323] font-['Lato','Open_Sans',sans-serif]">
      <TitleBar />
      <div className="flex flex-1">
        <div className="flex w-[200px] shrink-0 flex-col pr-px">
          <Logo />
          <Sidebar />
        </div>
        <div className="flex min-w-0 flex-1 flex-col">
          <TopBar />
          <main className="grid flex-1 grid-cols-[330fr_674fr_716fr] items-start bg-[#323232]">
            <div className="min-w-0">
              <h1 className="mb-[17px] whitespace-nowrap pl-6 text-[41px] leading-[100px] text-[#f0f0f0]">
                Saturation Sweeps
              </h1>
              <RgbBalance />
              <Reading />
            </div>
            <div className="min-w-0 pt-[22px]">
              <div className="grid grid-cols-3 pl-[50px] pr-9">
                <DeltaChart title="DeltaL" top={132} bottom={175} />
                <DeltaChart title="DeltaC" top={28} bottom={175} />
                <DeltaChart title="DeltaH" top={175} bottom={215} />
              </div>
              <Comparator />
              <div className="mt-[5px]">
                <DeltaEChart />
              </div>
            </div>
            <div className="min-w-0 pr-[5px] pt-4">
              <div className="border-[7px] border-[#bfbf00]">
                <CieDiagram />
              </div>
              <ResultTable />
            </div>
          </main>
          <BottomBar />
        </div>
      </div>
      <Taskbar />
      {/* Activation notice floats over the desktop */}
      <div className="pointer-events-none absolute bottom-[90px] right-[75px] w-[410px] whitespace-nowrap font-['Open_Sans',sans-serif] text-[#a0a0a0]/70">
        <p className="text-[19px] leading-6">Windows aktivieren</p>
        <p className="text-[14px] leading-5">Wechseln Sie zu den Einstellungen, um Windows zu aktivieren.</p>
      </div>
    </div>
  );
}
